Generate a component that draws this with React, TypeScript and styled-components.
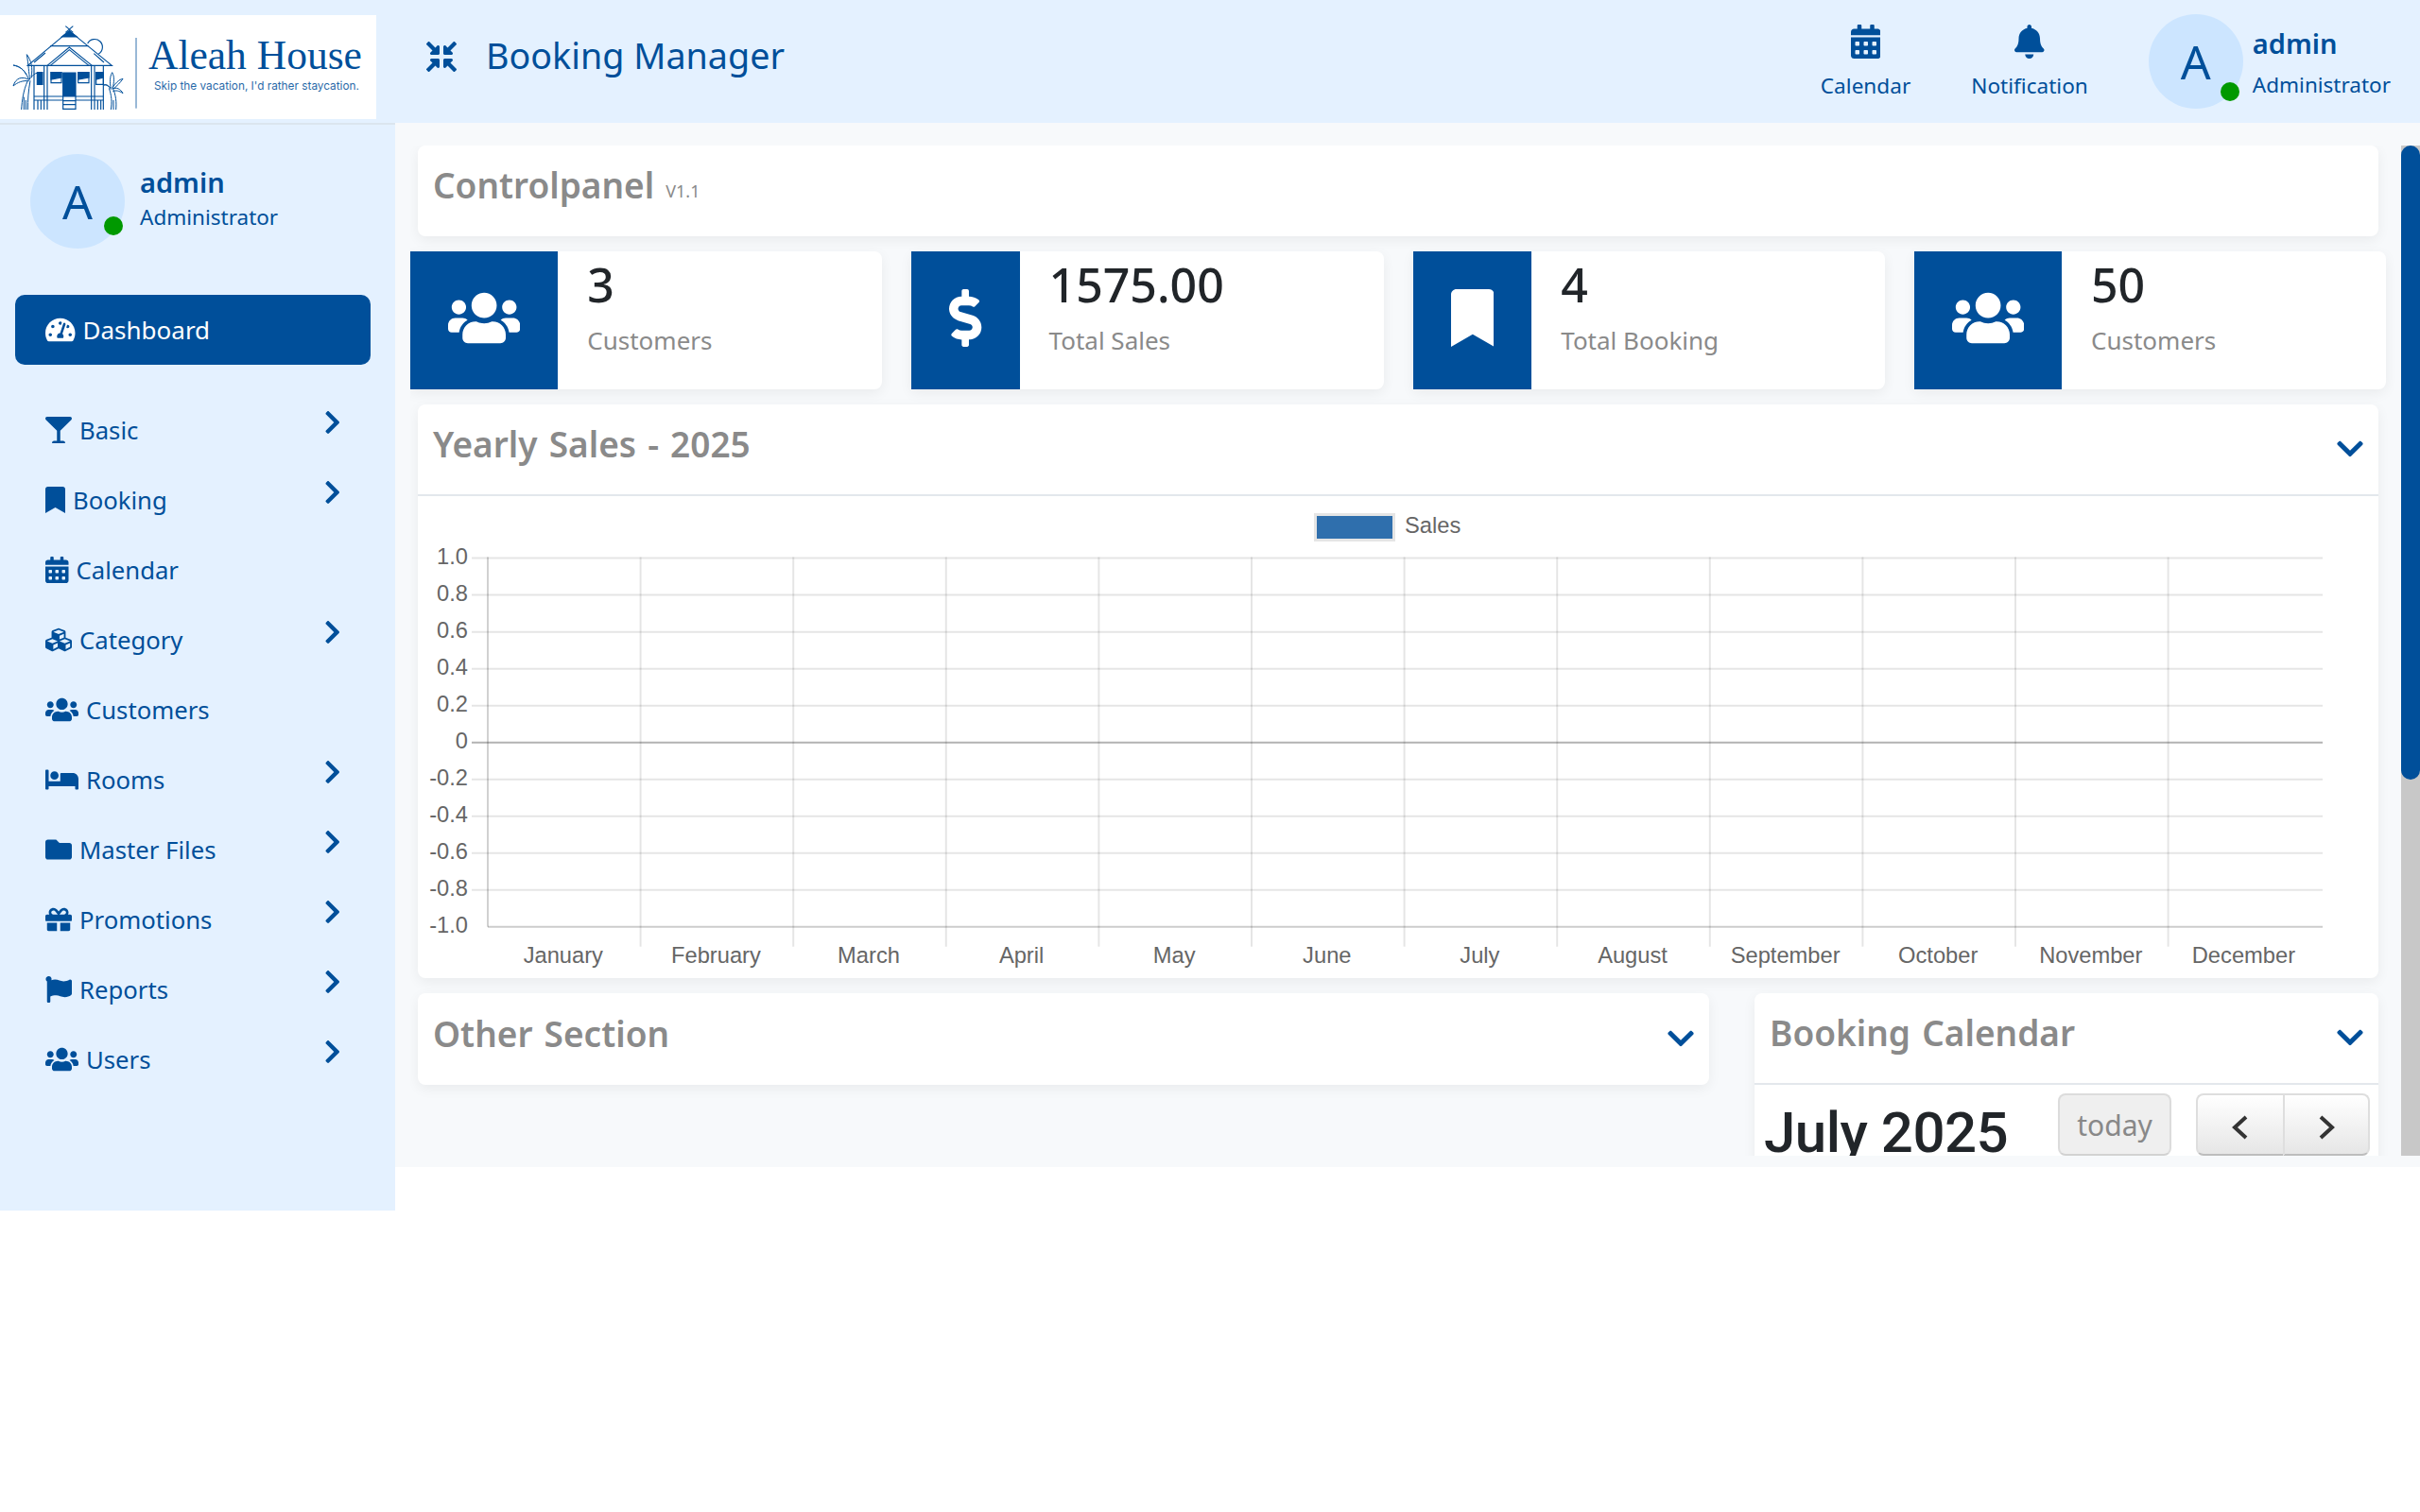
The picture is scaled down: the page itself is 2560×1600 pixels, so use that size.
import React from 'react'
import styled, { createGlobalStyle } from 'styled-components'
import {
    FaBed, FaBell, FaBookmark, FaCalendarAlt, FaChevronDown, FaChevronRight, FaCompressArrowsAlt,
    FaCubes, FaDollarSign, FaFlag, FaFolder, FaGift, FaGlassMartini, FaTachometerAlt, FaUsers,
} from 'react-icons/fa'

const primary = '#004f9a'
const lightBlue = '#e4f1ff'

const GlobalStyle = createGlobalStyle`
    html, body {
        margin: 0;
        padding: 0;
        background: #fff;
        font-family: "Noto Sans", "Open Sans", sans-serif;
    }
    * {
        box-sizing: border-box;
    }
    svg {
        flex: none;
    }
`

// w is the icon's width in em, from its viewBox
const menu = [
    { label: 'Basic', icon: <FaGlassMartini />, w: 1, more: true },
    { label: 'Booking', icon: <FaBookmark />, w: 0.75, more: true },
    { label: 'Calendar', icon: <FaCalendarAlt />, w: 0.875, more: false },
    { label: 'Category', icon: <FaCubes />, w: 1, more: true },
    { label: 'Customers', icon: <FaUsers />, w: 1.25, more: false },
    { label: 'Rooms', icon: <FaBed />, w: 1.25, more: true },
    { label: 'Master Files', icon: <FaFolder />, w: 1, more: true },
    { label: 'Promotions', icon: <FaGift />, w: 1, more: true },
    { label: 'Reports', icon: <FaFlag />, w: 1, more: true },
    { label: 'Users', icon: <FaUsers />, w: 1.25, more: true },
]

const stats = [
    { value: '3', label: 'Customers', icon: <FaUsers />, w: 1.25 },
    { value: '1575.00', label: 'Total Sales', icon: <FaDollarSign />, w: 0.5625 },
    { value: '4', label: 'Total Booking', icon: <FaBookmark />, w: 0.75 },
    { value: '50', label: 'Customers', icon: <FaUsers />, w: 1.25 },
]

const months = ['January', 'February', 'March', 'April', 'May', 'June', 'July', 'August', 'September', 'October', 'November', 'December']
const ticks = ['1.0', '0.8', '0.6', '0.4', '0.2', '0', '-0.2', '-0.4', '-0.6', '-0.8', '-1.0']

const LogoMark = () => (
    <svg width="150" height="110" viewBox="0 0 450 330" fill="none" stroke={primary} strokeWidth="3.5">
        <path d="M208 35l24 20M232 35l-24 20" />
        <path d="M220 50L88 160H355L220 50Z" />
        <path d="M196 69h48l-24-19z" fill={primary} />
        <path d="M160 98h120" />
        <path d="M278 90a25 25 0 1 1 35 33" />
        <path d="M150 160l70-58 72 58M160 160l60-50 62 50M108 150l36-30M330 150l-32-28" />
        <path d="M108 160v140M140 160v140M150 160v140M290 160v140M300 160v140M328 160v140" />
        <path d="M108 258h92M240 258h88M108 270h92M240 270h88M120 270v30M130 270v30M310 270v30M320 270v30" />
        <path d="M118 182h17v38h-17z" fill={primary} />
        <path d="M162 182h33v33h-33zM248 182h34v33h-34zM305 182h23v38h-23z" />
        <path d="M162 182h33v16l-33 6zM248 182h34v16l-34 6zM305 182h23v16l-23 6z" fill={primary} />
        <path d="M200 183h40v75h-40z" fill={primary} />
        <path d="M200 258v42M240 258v42M200 272h40M200 284h40M200 298h40" />
        <path d="M68 300c2-30 6-60 20-92M88 300c0-30 2-60 8-92M76 300v-40M82 300v-30" strokeWidth="3" />
        <path d="M92 205c-12-28-28-44-50-46 20 4 34 14 42 30M92 205c-22-12-42-6-50 20 14-12 30-18 50-16M95 205c-4-24-4-44-10-80 14 18 20 44 14 72M98 200c6-10 12-16 22-16" strokeWidth="3" />
        <path d="M352 300c4-24 2-46-6-68M368 300c2-24 0-46-10-68M360 300v-30" strokeWidth="3" />
        <path d="M352 232c-4-18-4-36 4-50 8 14 6 32 2 48M352 232c-8-8-14-14-22-10 8-2 16 4 22 14M356 232c10-16 22-28 34-30-8 12-18 22-30 32M356 234c14-6 26 0 34 14-12-8-22-10-32-6" strokeWidth="3" />
        <path d="M432 72v224" strokeWidth="3" opacity="0.8" />
    </svg>
)

const SalesChart = () => {
    const left = 74
    const right = 2015
    const top = 65.6
    const rowH = 39.02
    const colW = 161.6
    const bottom = top + rowH * 10
    return (
        <ChartSvg viewBox="0 0 2074 510" width="2074" height="510">
            <rect x="949.5" y="19.5" width="83" height="27" fill="#2f6fad" stroke="#e5e5e5" strokeWidth="3" />
            <ChartText x="1044" y="33">Sales</ChartText>
            {ticks.map((tick, i) => {
                const y = top + i * rowH
                let color = 'rgba(0,0,0,0.1)'
                if (tick === '0') color = 'rgba(0,0,0,0.3)'
                if (tick === '-1.0') color = 'rgba(0,0,0,0.2)'
                return (
                    <g key={tick}>
                        <line x1={tick === '-1.0' ? left : 57} x2={right} y1={y} y2={y} stroke={color} strokeWidth="2" />
                        <ChartText x="53" y={y} textAnchor="end">{tick}</ChartText>
                    </g>
                )
            })}
            {months.map((month, i) => {
                const x = left + i * colW
                return (
                    <g key={month}>
                        <line x1={x} x2={x} y1={top - 1} y2={i === 0 ? bottom : bottom + 21} stroke={i === 0 ? 'rgba(0,0,0,0.18)' : 'rgba(0,0,0,0.1)'} strokeWidth="2" />
                        <ChartText x={x + colW / 2 - 1} y={bottom + 31.5} textAnchor="middle">{month}</ChartText>
                    </g>
                )
            })}
        </ChartSvg>
    )
}

const App: React.FC = () => (
    <Page>
        <GlobalStyle />
        <Header>
            <Logo>
                <LogoMark />
                <LogoText>
                    <LogoName>Aleah House</LogoName>
                    <LogoTag>Skip the vacation, I'd rather staycation.</LogoTag>
                </LogoText>
            </Logo>
            <Collapse><FaCompressArrowsAlt /></Collapse>
            <AppTitle>Booking Manager</AppTitle>
            <HeaderRight>
                <HeaderLink><FaCalendarAlt /><span>Calendar</span></HeaderLink>
                <HeaderLink><FaBell /><span>Notification</span></HeaderLink>
                <Profile>
                    <Avatar>A<Online $right={4} $bottom={8} /></Avatar>
                    <ProfileText>
                        <ProfileName>admin</ProfileName>
                        <ProfileRole>Administrator</ProfileRole>
                    </ProfileText>
                </Profile>
            </HeaderRight>
        </Header>
        <Body>
            <Sidebar>
                <SideProfile>
                    <Avatar>A<Online $right={2} $bottom={14} /></Avatar>
                    <ProfileText>
                        <ProfileName>admin</ProfileName>
                        <ProfileRole>Administrator</ProfileRole>
                    </ProfileText>
                </SideProfile>
                <ActiveItem><FaTachometerAlt /><span>Dashboard</span></ActiveItem>
                <Nav>
                    {menu.map((item) => (
                        <NavItem key={item.label}>
                            <NavIcon $w={item.w}>{item.icon}</NavIcon>
                            <span>{item.label}</span>
                            {item.more && <NavArrow><FaChevronRight /></NavArrow>}
                        </NavItem>
                    ))}
                </Nav>
            </Sidebar>
            <Main>
                <Scroller>
                    <TitleCard>
                        <SectionTitle>Controlpanel</SectionTitle>
                        <Version>V1.1</Version>
                    </TitleCard>
                    <StatRow>
                        {stats.map((stat, i) => (
                            <StatCard key={i}>
                                <StatIcon $w={stat.w}>{stat.icon}</StatIcon>
                                <StatBody>
                                    <StatValue>{stat.value}</StatValue>
                                    <StatLabel>{stat.label}</StatLabel>
                                </StatBody>
                            </StatCard>
                        ))}
                    </StatRow>
                    <Card>
                        <CardHeader>
                            <SectionTitle>Yearly Sales - 2025</SectionTitle>
                            <Toggle><FaChevronDown /></Toggle>
                        </CardHeader>
                        <SalesChart />
                    </Card>
                    <BottomRow>
                        <Card>
                            <CardHeader $plain>
                                <SectionTitle>Other Section</SectionTitle>
                                <Toggle><FaChevronDown /></Toggle>
                            </CardHeader>
                        </Card>
                        <Card>
                            <CardHeader>
                                <SectionTitle>Booking Calendar</SectionTitle>
                                <Toggle><FaChevronDown /></Toggle>
                            </CardHeader>
                            <CalendarBody>
                                <MonthTitle>July 2025</MonthTitle>
                                <TodayButton>today</TodayButton>
                                <PagerGroup>
                                    <PagerButton aria-label="prev">
                                        <svg width="18" height="26" viewBox="0 0 18 26" fill="none" stroke="#333" strokeWidth="4"><path d="M15 2L3 13l12 11" /></svg>
                                    </PagerButton>
                                    <PagerButton aria-label="next">
                                        <svg width="18" height="26" viewBox="0 0 18 26" fill="none" stroke="#333" strokeWidth="4"><path d="M3 2l12 11L3 24" /></svg>
                                    </PagerButton>
                                </PagerGroup>
                            </CalendarBody>
                        </Card>
                    </BottomRow>
                </Scroller>
                <Track><Thumb /></Track>
            </Main>
        </Body>
    </Page>
)

const Page = styled.div`
    width: 2560px;
    height: 1600px;
    overflow: hidden;
    background: #fff;
`

const Header = styled.header`
    height: 130px;
    background: ${lightBlue};
    display: flex;
    align-items: center;
    color: ${primary};
`

const Logo = styled.div`
    width: 398px;
    height: 110px;
    align-self: flex-start;
    margin-top: 16px;
    background: #fff;
    display: flex;
`

const LogoText = styled.div`
    margin-left: 7px;
    padding-top: 20px;
    color: ${primary};
`

const LogoName = styled.div`
    font-family: "Liberation Serif", serif;
    font-size: 43.5px;
    line-height: 44px;
    white-space: nowrap;
`

const LogoTag = styled.div`
    font-family: Inter, sans-serif;
    font-size: 11.8px;
    line-height: 16px;
    margin: 3px 0 0 6px;
    opacity: 0.85;
    white-space: nowrap;
`

const Collapse = styled.div`
    margin: 0 0 10px 53px;
    font-size: 32px;
    display: flex;
`

const AppTitle = styled.div`
    margin: 0 0 12px 31px;
    font-size: 37.7px;
    line-height: 1;
`

const HeaderRight = styled.div`
    margin-left: auto;
    display: flex;
    align-items: center;
    gap: 64px;
    padding-right: 31px;
`

const HeaderLink = styled.div`
    display: flex;
    flex-direction: column;
    align-items: center;
    margin-top: 3px;
    font-size: 22.6px;
    line-height: 32px;
    svg {
        font-size: 36px;
        width: 0.875em;
        margin-bottom: 13px;
    }
`

const Avatar = styled.div`
    position: relative;
    width: 100px;
    height: 100px;
    flex: none;
    border-radius: 50%;
    background: #cce5ff;
    color: ${primary};
    font-size: 50px;
    display: flex;
    align-items: center;
    justify-content: center;
`

const Online = styled.span<{ $right: number; $bottom: number }>`
    position: absolute;
    right: ${(props) => props.$right}px;
    bottom: ${(props) => props.$bottom}px;
    width: 20px;
    height: 20px;
    border-radius: 50%;
    background: #009900;
`

const ProfileText = styled.div`
    display: flex;
    flex-direction: column;
    color: ${primary};
`

const ProfileName = styled.div`
    font-size: 29px;
    font-weight: 600;
    line-height: 40px;
`

const ProfileRole = styled.div`
    font-size: 22.5px;
    line-height: 34px;
`

const Profile = styled.div`
    display: flex;
    align-items: center;
    gap: 10px;
    ${ProfileText} {
        padding-top: 3px;
    }
    ${ProfileRole} {
        margin-top: 7px;
    }
`

const Body = styled.div`
    display: flex;
    align-items: flex-start;
`

const Sidebar = styled.aside`
    width: 418px;
    height: 1151px;
    flex: none;
    background: ${lightBlue};
    border-top: 2px solid #dbe5ee;
    padding: 31px 26px 0 16px;
    color: ${primary};
`

const SideProfile = styled.div`
    display: flex;
    align-items: center;
    gap: 16px;
    padding-left: 16px;
    ${ProfileText} {
        padding-bottom: 6px;
    }
`

const ActiveItem = styled.div`
    height: 74px;
    margin-top: 49px;
    border-radius: 10px;
    background: ${primary};
    color: #fff;
    display: flex;
    align-items: center;
    gap: 8px;
    padding-left: 32px;
    font-size: 26px;
    svg {
        font-size: 28px;
        width: 1.125em;
    }
`

const Nav = styled.nav`
    margin-top: 32px;
`

const NavItem = styled.div`
    height: 74px;
    display: flex;
    align-items: center;
    gap: 8px;
    padding: 0 32px 0 32px;
    font-size: 25.7px;
`

const NavIcon = styled.span<{ $w: number }>`
    display: flex;
    font-size: 28px;
    svg {
        width: ${(props) => props.$w}em;
    }
`

const NavArrow = styled.span`
    margin-left: auto;
    margin-bottom: 17px;
    display: flex;
    font-size: 28px;
    svg {
        width: 0.625em;
    }
`

const Main = styled.main`
    flex: 1;
    height: 1105px;
    background: #f7f9fb;
    padding: 24px 0 12px 16px;
    display: flex;
`

const Scroller = styled.div`
    flex: 1;
    min-width: 0;
    overflow: hidden;
    padding: 0 24px 0 8px;
    display: flex;
    flex-direction: column;
    gap: 16px;
`

const Track = styled.div`
    width: 20px;
    flex: none;
    background: #c8c8c8;
`

const Thumb = styled.div`
    height: 671px;
    background: ${primary};
    border-radius: 10px;
`

const Card = styled.section`
    background: #fff;
    border-radius: 8px;
    box-shadow: 0 4px 14px rgba(0, 0, 0, 0.06);
`

const TitleCard = styled(Card)`
    height: 96px;
    flex: none;
    padding: 0 16px 13px;
    display: flex;
    align-items: center;
    gap: 12px;
`

const SectionTitle = styled.h3`
    margin: 0;
    font-size: 37px;
    font-weight: 600;
    word-spacing: 2.5px;
    color: #8a8a8a;
    line-height: 1;
`

const Version = styled.small`
    font-size: 18px;
    color: #8a8a8a;
    margin-top: 12px;
`

const StatRow = styled.div`
    display: grid;
    grid-template-columns: repeat(4, 1fr);
    gap: 31px;
    margin: 0 -8px;
    flex: none;
`

const StatCard = styled.div`
    height: 146px;
    background: #fff;
    border-radius: 0 8px 8px 0;
    box-shadow: 0 4px 14px rgba(0, 0, 0, 0.06);
    display: flex;
`

const StatIcon = styled.div<{ $w: number }>`
    padding: 0 40px 5px;
    background: ${primary};
    color: #fff;
    font-size: 61px;
    display: flex;
    align-items: center;
    svg {
        width: ${(props) => props.$w}em;
    }
`

const StatBody = styled.div`
    padding: 2px 0 0 31px;
`

const StatValue = styled.div`
    font-size: 50px;
    font-weight: 500;
    line-height: 66px;
    color: #212529;
`

const StatLabel = styled.div`
    margin-top: 8px;
    font-size: 26px;
    line-height: 36px;
    color: #8a8a8a;
`

const CardHeader = styled.div<{ $plain?: boolean }>`
    height: 97px;
    padding: 0 16px 12px;
    display: flex;
    align-items: center;
    justify-content: space-between;
    border-bottom: ${(props) => (props.$plain ? 'none' : '2px solid #e3e7ec')};
`

const Toggle = styled.span`
    color: ${primary};
    font-size: 32px;
    display: flex;
    margin: 10px 0 0;
    svg {
        width: 0.875em;
    }
`

const ChartSvg = styled.svg`
    display: block;
`

const ChartText = styled.text`
    font-family: "Liberation Sans", Arial, sans-serif;
    font-size: 23.7px;
    fill: #666;
    dominant-baseline: middle;
`

const BottomRow = styled.div`
    display: grid;
    grid-template-columns: 1366px 660px;
    gap: 48px;
    align-items: start;
    flex: none;
`

const CalendarBody = styled.div`
    height: 140px;
    padding: 9px 9px 0 10px;
    display: flex;
    align-items: flex-start;
`

const MonthTitle = styled.h2`
    margin: 4px auto 0 0;
    font-family: Roboto, "Noto Sans", sans-serif;
    font-size: 60px;
    font-weight: 500;
    letter-spacing: -0.5px;
    line-height: 76px;
    color: #212529;
`

const TodayButton = styled.button`
    width: 120px;
    height: 66px;
    border: 2px solid #dcdcdc;
    border-bottom-color: #d2d2d2;
    border-radius: 8px;
    background: #efefef;
    color: #888;
    font-family: inherit;
    font-size: 30px;
    padding: 0;
`

const PagerGroup = styled.div`
    margin-left: 26px;
    display: flex;
`

const PagerButton = styled.button`
    width: 92px;
    height: 66px;
    border: 2px solid #dedede;
    border-bottom-color: #bdbdbd;
    background: linear-gradient(#fff, #e6e6e6);
    display: flex;
    align-items: center;
    justify-content: center;
    padding: 6px 0 0;
    &:first-child {
        border-radius: 8px 0 0 8px;
        border-right: none;
    }
    &:last-child {
        border-radius: 0 8px 8px 0;
    }
`

export default App
